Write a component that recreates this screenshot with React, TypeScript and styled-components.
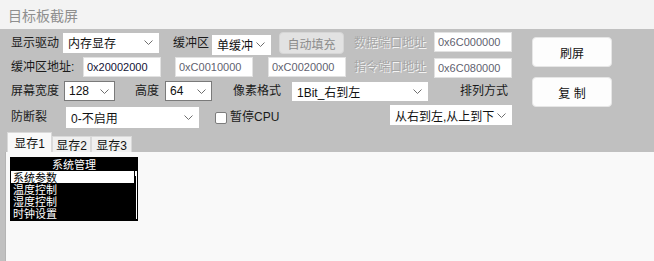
import * as React from 'react';
import styled, {createGlobalStyle} from 'styled-components';

const GlobalStyle = createGlobalStyle`
  html, body {
    margin: 0;
    padding: 0;
    background: #f9f9f9;
  }
  body {
    font-family: "Liberation Sans", "Noto Sans CJK SC", sans-serif;
    font-size: 12px;
    color: #1a1a1a;
  }
`;

const Window = styled.div`
  width: 654px;
  height: 261px;
  display: flex;
  flex-direction: column;
  overflow: hidden;
  background: #c0c0c0;
`;

const TitleBar = styled.div`
  height: 29px;
  flex: none;
  display: flex;
  align-items: center;
  padding-left: 8px;
  background: #f3f3f3;
  color: #8f8f8f;
  font-family: "Noto Sans CJK SC", sans-serif;
  font-size: 14px;
`;

const ControlPanel = styled.div`
  display: flex;
  padding-top: 2px;
  flex: none;
`;

const Form = styled.div`
  width: 520px;
  display: flex;
  flex-direction: column;
`;

const Row = styled.div<{$h: number}>`
  display: flex;
  align-items: center;
  height: ${p => p.$h}px;
`;

const Label = styled.span<{$ml?: number; $w: number; $dy?: number}>`
  flex: none;
  width: ${p => p.$w}px;
  margin-left: ${p => p.$ml || 0}px;
  margin-top: ${p => p.$dy || 0}px;
  line-height: 16px;
  white-space: nowrap;
`;

const DimLabel = styled(Label)`
  color: #a6a6a6;
  text-shadow: 1px 1px 0 #f4f4f4;
`;

const SelectBox = styled.div<{$ml?: number; $w: number; $h?: number; $dy?: number; $border?: boolean}>`
  flex: none;
  box-sizing: border-box;
  display: flex;
  align-items: center;
  justify-content: space-between;
  width: ${p => p.$w}px;
  height: ${p => p.$h || 20}px;
  margin-left: ${p => p.$ml || 0}px;
  margin-top: ${p => p.$dy || 0}px;
  padding: 0 5px 0 4px;
  background: #ffffff;
  border: 1px solid ${p => (p.$border ? '#7a7a7a' : '#ffffff')};
  color: #111111;
  white-space: nowrap;
`;

const Input = styled.div<{$ml?: number; $dy?: number; $dim?: boolean}>`
  flex: none;
  box-sizing: border-box;
  display: flex;
  align-items: center;
  width: 78px;
  height: 20px;
  margin-left: ${p => p.$ml || 0}px;
  margin-top: ${p => p.$dy || 0}px;
  padding-left: 3px;
  background: #ffffff;
  border: 1px solid #e2e2e2;
  color: ${p => (p.$dim ? '#5f5f6f' : '#111133')};
  font-size: 11px;
`;

const FillButton = styled.div<{$ml?: number}>`
  flex: none;
  box-sizing: border-box;
  width: 65px;
  height: 22px;
  margin-left: ${p => p.$ml || 0}px;
  display: flex;
  align-items: center;
  justify-content: center;
  border-radius: 4px;
  border: 1px solid #d6d6d6;
  background: #e2e2e2;
  color: #8c8c8c;
`;

const Check = styled.div<{$ml?: number}>`
  flex: none;
  box-sizing: border-box;
  width: 12px;
  height: 12px;
  margin-left: ${p => p.$ml || 0}px;
  margin-top: 3px;
  border: 1px solid #7c7c7c;
  border-radius: 2px;
  background: #ffffff;
`;

const ButtonColumn = styled.div`
  display: flex;
  flex-direction: column;
  gap: 10px;
  margin-left: 12px;
  padding-top: 6px;
`;

const ActionButton = styled.div`
  box-sizing: border-box;
  width: 80px;
  height: 30px;
  display: flex;
  align-items: center;
  justify-content: center;
  border-radius: 4px;
  border: 1px solid #e6e6e6;
  background: #fdfdfd;
  color: #111111;
  white-space: pre;
`;

const TabStrip = styled.div`
  display: flex;
  align-items: flex-end;
  height: 21px;
  margin-top: 2px;
  padding-left: 7px;
  flex: none;
`;

const Tab = styled.div<{$active?: boolean; $w: number}>`
  box-sizing: border-box;
  width: ${p => p.$w}px;
  height: ${p => (p.$active ? 20 : 16)}px;
  display: flex;
  align-items: center;
  justify-content: center;
  background: ${p => (p.$active ? '#f9f9f9' : '#f0f0f0')};
  border: 1px solid #d9d9d9;
  border-bottom: none;
  color: #111111;
`;

const TabBody = styled.div`
  flex: 1;
  margin-left: 5px;
  padding: 5px 0 0 4px;
  background: #f9f9f9;
  border-left: 1px solid #b4b4b4;
`;

const Lcd = styled.div`
  width: 128px;
  height: 64px;
  background: #000000;
  color: #ffffff;
  font-family: "Noto Sans CJK SC", sans-serif;
  font-size: 11px;
  display: flex;
  flex-direction: column;
`;

const LcdHeader = styled.div`
  height: 14px;
  line-height: 14px;
  text-align: center;
  overflow: hidden;
`;

const LcdBody = styled.div`
  display: flex;
  padding-left: 1px;
`;

const LcdList = styled.div`
  width: 123px;
  display: flex;
  flex-direction: column;
`;

const LcdItem = styled.div<{$sel?: boolean}>`
  height: 12px;
  line-height: 12px;
  overflow: hidden;
  padding-left: 2px;
  background: ${p => (p.$sel ? '#ffffff' : '#000000')};
  color: ${p => (p.$sel ? '#000000' : '#ffffff')};
`;

const ScrollTrack = styled.div`
  position: relative;
  width: 1px;
  height: 48px;
  margin-left: 2px;
  background: #ffffff;
`;

const ScrollThumb = styled.div`
  position: absolute;
  left: -1px;
  top: 0;
  width: 2px;
  height: 5px;
  background: #ffffff;
`;

const Chevron = () => (
  <svg width="9" height="5" viewBox="0 0 9 5">
    <polyline points="0.5,0.5 4.5,4.5 8.5,0.5" fill="none" stroke="#6e6e6e" strokeWidth="1"/>
  </svg>
);

const Select = (props: {text: string; w: number; ml?: number; h?: number; dy?: number; border?: boolean}) => (
  <SelectBox $w={props.w} $ml={props.ml} $h={props.h} $dy={props.dy} $border={props.border}>
    <span>{props.text}</span>
    <Chevron/>
  </SelectBox>
);

const menuItems = ['系统参数', '温度控制', '湿度控制', '时钟设置'];

const App = () => {
  return (
    <>
      <GlobalStyle/>
      <Window>
        <TitleBar>目标板截屏</TitleBar>
        <ControlPanel>
          <Form>
            <Row $h={24}>
              <Label $ml={11} $w={52}>显示驱动</Label>
              <Select text='内存显存' w={96} dy={-1}/>
              <Label $ml={14} $w={39}>缓冲区</Label>
              <Select text='单缓冲' w={59} dy={3}/>
              <FillButton $ml={8}>自动填充</FillButton>
              <DimLabel $ml={10} $w={80}>数据端口地址</DimLabel>
              <Input $dim $dy={-2}>0x6C000000</Input>
            </Row>
            <Row $h={24}>
              <Label $ml={11} $w={72}>缓冲区地址:</Label>
              <Input>0x20002000</Input>
              <Input $dim $ml={14}>0xC0010000</Input>
              <Input $dim $ml={15}>0xC0020000</Input>
              <DimLabel $ml={8} $w={80}>指令端口地址</DimLabel>
              <Input $dim $dy={1}>0x6C080000</Input>
            </Row>
            <Row $h={24}>
              <Label $ml={11} $w={53}>屏幕宽度</Label>
              <Select text='128' w={51} border/>
              <Label $ml={20} $w={30}>高度</Label>
              <Select text='64' w={47} border/>
              <Label $ml={21} $w={59}>像素格式</Label>
              <Select text='1Bit_右到左' w={136} h={19}/>
              <Label $ml={32} $w={48}>排列方式</Label>
            </Row>
            <Row $h={26}>
              <Label $ml={11} $w={55} $dy={2}>防断裂</Label>
              <Select text='0-不启用' w={133} h={21} dy={3}/>
              <Check $ml={16}/>
              <Label $ml={3} $w={160} $dy={2}>暂停CPU</Label>
              <Select text='从右到左,从上到下' w={122} dy={-2}/>
            </Row>
          </Form>
          <ButtonColumn>
            <ActionButton>刷屏</ActionButton>
            <ActionButton>复 制</ActionButton>
          </ButtonColumn>
        </ControlPanel>
        <TabStrip>
          <Tab $active $w={45}>显存1</Tab>
          <Tab $w={39}>显存2</Tab>
          <Tab $w={41}>显存3</Tab>
        </TabStrip>
        <TabBody>
          <Lcd>
            <LcdHeader>系统管理</LcdHeader>
            <LcdBody>
              <LcdList>
                {menuItems.map((item, i) => (
                  <LcdItem key={item} $sel={i === 0}>{item}</LcdItem>
                ))}
              </LcdList>
              <ScrollTrack>
                <ScrollThumb/>
              </ScrollTrack>
            </LcdBody>
          </Lcd>
        </TabBody>
      </Window>
    </>
  );
};

export default App;
